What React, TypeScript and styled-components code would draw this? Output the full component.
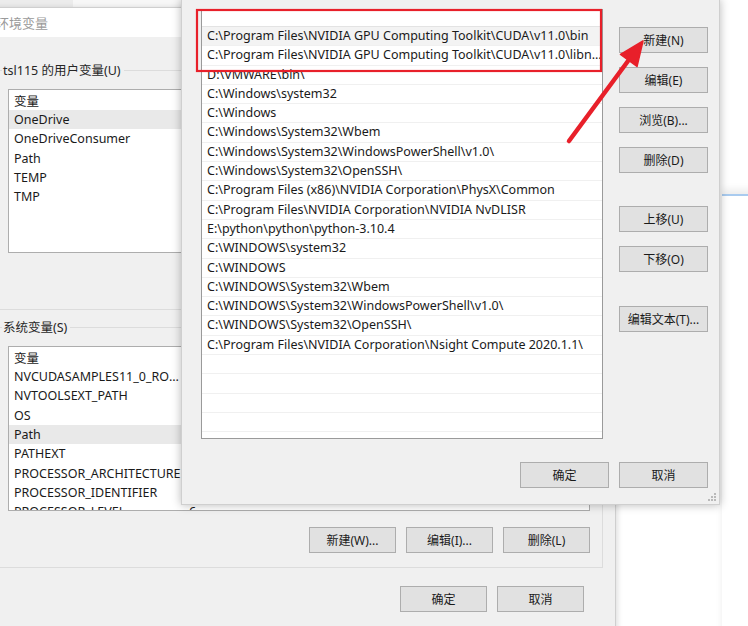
import React from 'react';
import styled, { createGlobalStyle } from 'styled-components';

const PATH_ENTRIES = [
  'C:\\Program Files\\NVIDIA GPU Computing Toolkit\\CUDA\\v11.0\\bin',
  'C:\\Program Files\\NVIDIA GPU Computing Toolkit\\CUDA\\v11.0\\libnvvp',
  'D:\\VMWARE\\bin\\',
  'C:\\Windows\\system32',
  'C:\\Windows',
  'C:\\Windows\\System32\\Wbem',
  'C:\\Windows\\System32\\WindowsPowerShell\\v1.0\\',
  'C:\\Windows\\System32\\OpenSSH\\',
  'C:\\Program Files (x86)\\NVIDIA Corporation\\PhysX\\Common',
  'C:\\Program Files\\NVIDIA Corporation\\NVIDIA NvDLISR',
  'E:\\python\\python\\python-3.10.4',
  'C:\\WINDOWS\\system32',
  'C:\\WINDOWS',
  'C:\\WINDOWS\\System32\\Wbem',
  'C:\\WINDOWS\\System32\\WindowsPowerShell\\v1.0\\',
  'C:\\WINDOWS\\System32\\OpenSSH\\',
  'C:\\Program Files\\NVIDIA Corporation\\Nsight Compute 2020.1.1\\',
];

const USER_VARS = ['OneDrive', 'OneDriveConsumer', 'Path', 'TEMP', 'TMP'];

const SYSTEM_VARS = [
  { name: 'NVCUDASAMPLES11_0_ROOT', value: '' },
  { name: 'NVTOOLSEXT_PATH', value: '' },
  { name: 'OS', value: '' },
  { name: 'Path', value: '' },
  { name: 'PATHEXT', value: '' },
  { name: 'PROCESSOR_ARCHITECTURE', value: '' },
  { name: 'PROCESSOR_IDENTIFIER', value: '' },
  { name: 'PROCESSOR_LEVEL', value: '6' },
];

const GlobalStyle = createGlobalStyle`
  html, body {
    margin: 0;
    padding: 0;
    background: #ffffff;
  }
  body {
    font-family: "Noto Sans", "Noto Sans CJK SC", sans-serif;
    font-size: 12px;
    color: #1a1a1a;
  }
`;

const Grip: React.FC = () => (
  <GripBox>
    <svg width="8" height="8" viewBox="0 0 8 8">
      {[[6, 0], [6, 3], [3, 3], [6, 6], [3, 6], [0, 6]].map(([x, y]) => (
        <rect key={`${x}-${y}`} x={x} y={y} width="2" height="2" fill="#b9b9b9" />
      ))}
    </svg>
  </GripBox>
);

const EnvVarList: React.FC<{ items: { name: string; value: string }[]; selected: string; height: number }> = ({ items, selected, height }) => (
  <ListView style={{ height }}>
    <ListRow isHeader>
      <NameCell>变量</NameCell>
      <ValueCell>值</ValueCell>
    </ListRow>
    {items.map(({ name, value }) => (
      <ListRow key={name} isSelected={name === selected}>
        <NameCell>{name}</NameCell>
        <ValueCell>{value}</ValueCell>
      </ListRow>
    ))}
  </ListView>
);

const EnvironmentWindow: React.FC = () => (
  <BackWindow>
    <TitleBar>环境变量</TitleBar>
    <WindowBody>
      <GroupBox>
        <GroupLegend>tsl115 的用户变量(U)</GroupLegend>
        <EnvVarList items={USER_VARS.map((name) => ({ name, value: '' }))} selected="OneDrive" height={164} />
        {/* the user-variable buttons sit under the edit dialog */}
        <HiddenButtonRow />
      </GroupBox>
      <GroupBox isSecond>
        <GroupLegend>系统变量(S)</GroupLegend>
        <EnvVarList items={SYSTEM_VARS} selected="Path" height={165} />
        <ButtonRow>
          <Button>新建(W)...</Button>
          <Button>编辑(I)...</Button>
          <Button>删除(L)</Button>
        </ButtonRow>
      </GroupBox>
      <FooterRow>
        <Button>确定</Button>
        <Button>取消</Button>
      </FooterRow>
    </WindowBody>
    <Grip />
  </BackWindow>
);

const EditPathDialog: React.FC = () => (
  <FrontDialog>
    <PathList>
      <PathListTop />
      {PATH_ENTRIES.map((entry, index) => (
        <PathRow key={entry} isSelected={index === 0}>{entry}</PathRow>
      ))}
      {Array.from({ length: 6 }, (_, i) => (
        <PathRow key={`empty-${i}`} />
      ))}
    </PathList>
    <SideButtons>
      <DialogButton>新建(N)</DialogButton>
      <DialogButton>编辑(E)</DialogButton>
      <DialogButton>浏览(B)...</DialogButton>
      <DialogButton>删除(D)</DialogButton>
      <DialogButton gapBefore={33}>上移(U)</DialogButton>
      <DialogButton>下移(O)</DialogButton>
      <DialogButton gapBefore={34}>编辑文本(T)...</DialogButton>
    </SideButtons>
    <DialogFooter>
      <DialogButton>确定</DialogButton>
      <DialogButton>取消</DialogButton>
    </DialogFooter>
    <Grip />
  </FrontDialog>
);

// red markup drawn over the screenshot
const Annotation: React.FC = () => (
  <AnnotationLayer width="748" height="626" viewBox="0 0 748 626">
    <rect x="197" y="10" width="404" height="61" fill="none" stroke="#e8202a" strokeWidth="2.2" />
    <line x1="569" y1="141" x2="628" y2="61" stroke="#e8202a" strokeWidth="4.5" strokeLinecap="round" />
    <polygon points="643,41 620.5,54.5 637,66.5" fill="#e8202a" stroke="#e8202a" strokeWidth="1.5" strokeLinejoin="round" />
  </AnnotationLayer>
);

export default function App() {
  return (
    <>
      <GlobalStyle />
      <Desktop>
        <TopStrip>
          <TopStripPart tone="#ececec" width={73} />
          <TopStripPart tone="#f7f7f7" width={120} />
        </TopStrip>
        <SideWindow />
        <EnvironmentWindow />
        <EditPathDialog />
        <Annotation />
      </Desktop>
    </>
  );
}

const Desktop = styled.div`
  position: relative;
  width: 748px;
  height: 626px;
  overflow: hidden;
  background: #ffffff;
`;

const TopStrip = styled.div`
  position: absolute;
  left: 0;
  top: 0;
  display: flex;
  height: 8px;
`;

const TopStripPart = styled.div<{ tone: string; width: number }>`
  width: ${({ width }) => width}px;
  background: ${({ tone }) => tone};
`;

const SideWindow = styled.div`
  position: absolute;
  left: 722px;
  top: 194px;
  width: 120px;
  height: 480px;
  background: #ffffff;
  border-top: 2px solid #a9cbef;
  box-shadow: 0 -5px 7px rgba(0, 0, 0, 0.07);
`;

const BackWindow = styled.div`
  position: absolute;
  left: -20px;
  top: 7px;
  width: 636px;
  height: 640px;
  display: flex;
  flex-direction: column;
  border: 1px solid #cfcfcf;
  box-sizing: border-box;
  background: #f0f0f0;
  box-shadow: 2px 0 5px rgba(0, 0, 0, 0.12);
`;

const TitleBar = styled.div`
  height: 29px;
  display: flex;
  align-items: center;
  padding-left: 15px;
  background: #ffffff;
  color: #9a9a9a;
  font-family: "Noto Sans CJK SC", sans-serif;
  font-size: 13px;
`;

const WindowBody = styled.div`
  flex: 1;
  display: flex;
  flex-direction: column;
  padding: 25px 12px 0 12px;
`;

const GroupBox = styled.fieldset<{ isSecond?: boolean }>`
  margin: ${({ isSecond }) => (isSecond ? '9px' : '0')} 0 0 0;
  padding: 10px 12px 14px 14px;
  border: 1px solid #dcdcdc;
  min-width: 0;
`;

const GroupLegend = styled.legend`
  margin-left: -6px;
  padding: 0 3px 0 1px;
  line-height: 17px;
  font-size: 12.5px;
  color: #262626;
`;

const ListView = styled.div`
  background: #ffffff;
  border: 1px solid #adadad;
  box-sizing: border-box;
  overflow: hidden;
`;

const ListRow = styled.div<{ isHeader?: boolean; isSelected?: boolean }>`
  display: grid;
  grid-template-columns: 174px 1fr;
  height: ${({ isHeader }) => (isHeader ? '20px' : '19.3px')};
  align-items: center;
  background: ${({ isSelected }) => (isSelected ? '#e9e9e9' : 'transparent')};
  font-size: 12.5px;
  color: #1a1a1a;
  white-space: nowrap;
`;

const NameCell = styled.div`
  padding-left: 5px;
  overflow: hidden;
  text-overflow: ellipsis;
`;

const ValueCell = styled.div`
  padding-left: 6px;
  overflow: hidden;
`;

const ButtonRow = styled.div`
  display: flex;
  justify-content: flex-end;
  gap: 10px;
  margin-top: 16px;
`;

const HiddenButtonRow = styled.div`
  height: 26px;
  margin-top: 16px;
`;

const FooterRow = styled.div`
  display: flex;
  justify-content: flex-end;
  gap: 10px;
  margin-top: 18px;
  padding-right: 19px;
`;

const Button = styled.div`
  width: 87px;
  height: 26px;
  box-sizing: border-box;
  display: flex;
  align-items: center;
  justify-content: center;
  background: #e1e1e1;
  border: 1px solid #adadad;
  font-size: 12px;
  color: #1a1a1a;
`;

const FrontDialog = styled.div`
  position: absolute;
  left: 181px;
  top: -1px;
  width: 539px;
  height: 506px;
  box-sizing: border-box;
  display: grid;
  grid-template-columns: 402px 89px;
  grid-template-rows: 430px auto;
  column-gap: 16px;
  padding: 10px 13px 0 19px;
  background: #f0f0f0;
  border: 1px solid #cfcfcf;
  border-top: none;
  box-shadow: 0 0 9px rgba(0, 0, 0, 0.28);
`;

const PathList = styled.div`
  background: #ffffff;
  border: 1px solid #9a9a9a;
  box-sizing: border-box;
  overflow: hidden;
`;

const PathListTop = styled.div`
  height: 16px;
  border-bottom: 1px solid #e3e3e3;
`;

const PathRow = styled.div<{ isSelected?: boolean }>`
  height: 19.3px;
  line-height: 18.3px;
  box-sizing: border-box;
  padding: 0 0 0 5px;
  border-bottom: 1px solid #f0f0f0;
  background: ${({ isSelected }) => (isSelected ? '#f3f3f3' : '#ffffff')};
  font-size: 12.5px;
  color: #1a1a1a;
  white-space: nowrap;
  overflow: hidden;
  text-overflow: ellipsis;
`;

const SideButtons = styled.div`
  display: flex;
  flex-direction: column;
  gap: 14px;
  padding-top: 18px;
`;

const DialogButton = styled(Button)<{ gapBefore?: number }>`
  width: 89px;
  flex: none;
  margin-top: ${({ gapBefore }) => (gapBefore ? gapBefore - 14 : 0)}px;
`;

const DialogFooter = styled.div`
  grid-column: 1 / -1;
  display: flex;
  justify-content: flex-end;
  gap: 10px;
  margin-top: 23px;
`;

const GripBox = styled.div`
  position: absolute;
  right: 3px;
  bottom: 3px;
  width: 8px;
  height: 8px;
  line-height: 0;
`;

const AnnotationLayer = styled.svg`
  position: absolute;
  left: 0;
  top: 0;
  pointer-events: none;
`;
